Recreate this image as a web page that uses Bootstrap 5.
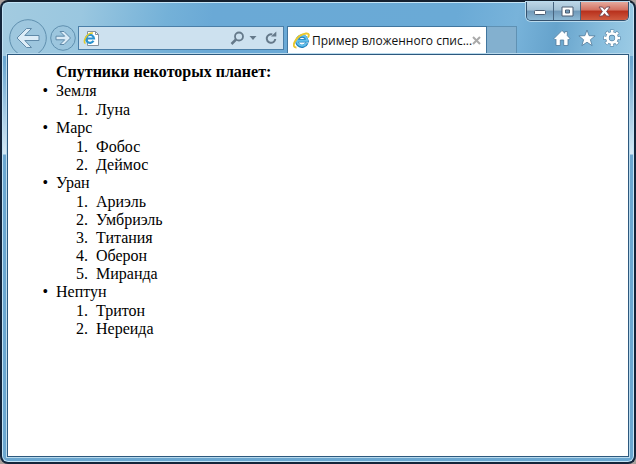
<!DOCTYPE html>
<html lang="ru">
<head>
<meta charset="utf-8">
<meta name="viewport" content="width=device-width, initial-scale=1">
<title>Пример вложенного списка</title>
<link href="https://cdn.jsdelivr.net/npm/bootstrap@5.3.0/dist/css/bootstrap.min.css" rel="stylesheet">
<style>
@counter-style spaced-decimal { system: extends decimal; suffix: ".\00a0\00a0"; }
body { background: #a99f9c; font-family: "Open Sans", "Noto Sans", sans-serif; }
.window {
  border: 2px solid #14253b; border-top-color: #14202f; border-radius: 8px;
  padding: 0 5px 5px;
  box-shadow: inset 0 0 0 1px #c4e4f6;
  background:
    linear-gradient(180deg, #8fc0dd00 0, #a5cde400 60px, #d5e9f5 152px, #6aa5cf00 153px) 0 0 / 6px 100% no-repeat,
    linear-gradient(180deg, #8fc0dd00 0, #a5cde400 60px, #d5e9f5 152px, #6aa5cf00 153px) 100% 0 / 6px 100% no-repeat,
    linear-gradient(100deg, #a3cbe0 0, #9ac7e0 80px, #74b1d8 165px, #6aa9d6 210px, #6aaad6 450px, #78b3da 510px, #66a3cc 550px, #8abfde 600px, #9ccbe5 100%) 0 0 / 100% 54px no-repeat,
    #6ba7d0;
}
.plain { background: none; border: 0; padding: 0; line-height: 0; color: inherit; flex-shrink: 0; }
.captions { height: 17px; }
.caption-group { border: 1px solid #34516e; border-top: 0; border-radius: 0 0 5px 5px; overflow: hidden; height: 19px; box-shadow: 0 0 0 1px #b9daed; }
.cap { width: 27px; background: linear-gradient(#bcd5e6 0, #a2c0d5 45%, #6f98b8 50%, #8db9d5 100%); border-right: 1px solid #47647f; }
.cap-close { width: 47px; border-right: 0; background: linear-gradient(#e5a99d 0, #d3705f 45%, #b8301c 50%, #cf5b40 100%); }
.toolbar-row { height: 35px; overflow: hidden; padding-left: 2px; }
.nav-zone { height: 38px; gap: 3px; }
.address { flex: 0 1 206px; min-width: 0; height: 24px; margin: 7px 3px 0 2px; border: 1px solid #4b7fa8; background: #cde1ef; color: #65798a; padding: 0 5px 0 4px; }
.address input { flex: 1 1 0; width: 0; min-width: 0; border: 0; background: none; outline: 0; font-size: 12px; }
.tab-item { flex: 0 1 200px; min-width: 0; height: 28px; margin-top: 7px; border: 1px solid #41769f; border-bottom: 0; background: #fff; padding: 0 5px; font-size: 12px; color: #111; }
.tab-title { flex: 1 1 0; min-width: 0; margin-left: 2px; }
.new-tab { width: 30px; height: 28px; margin-top: 7px; background: #83b0cf; border: 1px solid #5f91b3; border-left: 0; border-bottom: 0; }
.tools { gap: 7px; padding-right: 8px; margin-top: 9px; height: 20px; }
.page-view { border: 1px solid #2d597e; box-shadow: 0 0 0 1px #b9daed; background: #fff; color: #000; padding: 8px 8px 8px 48px; font: 16px/18px "Liberation Serif", serif; }
.page-view h1 { font: bold 16px/18px "Liberation Serif", serif; margin: 0 0 1px; }
.page-view ul { margin: 0; padding: 0; list-style-type: "•\00a0\00a0"; }
.page-view ol { margin: 1px 0 0; padding-left: 40px; list-style-type: spaced-decimal; }
</style>
<script src="https://cdn.jsdelivr.net/npm/bootstrap@5.3.0/dist/js/bootstrap.bundle.min.js" defer></script>
</head>
<body>
<div class="window d-flex flex-column min-vh-100">
  <div class="captions d-flex justify-content-end">
    <div class="caption-group d-flex">
      <button class="plain cap" aria-label="Свернуть"><svg width="14" height="8" viewBox="0 0 14 8"><rect x="1.500" y="3.500" width="11" height="4" rx="1" fill="#fff" stroke="#4c5d72"/></svg></button>
      <button class="plain cap" aria-label="Развернуть"><svg width="13" height="11" viewBox="0 0 13 11"><path d="M1 1h11v9H1zM4.500 4v3h4V4z" fill="#fff" fill-rule="evenodd" stroke="#4c5d72"/></svg></button>
      <button class="plain cap cap-close" aria-label="Закрыть"><svg width="13" height="11" viewBox="0 0 13 11"><path d="M1 1h3.500l2 2.400L8.500 1H12L8.600 5.500 12 10H8.500l-2-2.400-2 2.400H1l3.400-4.500z" fill="#fff" stroke="#6d4350" stroke-width=".9"/></svg></button>
    </div>
  </div>
  <div class="toolbar-row d-flex align-items-start">
    <div class="nav-zone d-flex align-items-center flex-shrink-0">
      <button class="plain" aria-label="Назад"><svg width="38" height="38" viewBox="0 0 38 38"><circle cx="19" cy="19" r="18.300" fill="#9bc4dc" fill-opacity=".5" stroke="#6090af"/><path d="M8 19l9.500-9.500h5L15.800 16.500H30v5H15.800l6.700 7h-5z" fill="#dcecf7" stroke="#608aa9"/></svg></button>
      <button class="plain" aria-label="Вперёд"><svg width="26" height="26" viewBox="0 0 26 26"><circle cx="13" cy="13" r="12.300" fill="#9bc4dc" fill-opacity=".5" stroke="#6090af"/><path d="M20.500 13l-6.500 6.500h-4l4.700-4.700H6v-3.600h8.700L10 6.500h4z" fill="#dcecf7" stroke="#608aa9"/></svg></button>
    </div>
    <div class="address d-flex align-items-center">
      <svg class="flex-shrink-0" width="17" height="17" viewBox="0 0 17 17"><path d="M4.500 1.500h8l3 3v11h-11z" fill="#fff" stroke="#8292a0"/><path d="M12.500 1.500v3h3" fill="none" stroke="#8292a0"/><path d="M10.500 10.800A4 4 0 1 1 11 8.500H4" fill="none" stroke="#2a93cf" stroke-width="2.200"/><path d="M2.500 13.500C-1 12 4 2.500 10 3" fill="none" stroke="#e1c92e" stroke-width="1.500"/></svg>
      <input type="text" aria-label="Адрес">
      <button class="plain" aria-label="Поиск"><svg width="15" height="15" viewBox="0 0 15 15"><circle cx="9" cy="5.500" r="4" fill="none" stroke="currentColor" stroke-width="1.800"/><path d="M6 8.500L1.500 13" stroke="currentColor" stroke-width="2.500"/></svg></button>
      <button class="plain ms-1" aria-label="Список"><svg width="8" height="6" viewBox="0 0 8 6"><path d="M.5 1h7L4 5z" fill="currentColor"/></svg></button>
      <button class="plain ms-2" aria-label="Обновить"><svg width="13" height="14" viewBox="0 0 13 14"><path d="M10.300 8a4.300 4.300 0 1 1-3-4.600" fill="none" stroke="currentColor" stroke-width="2"/><path d="M6 5.500h5.300V.5z" fill="currentColor"/></svg></button>
    </div>
    <div class="tab-item d-flex align-items-center">
      <svg class="flex-shrink-0" width="17" height="17" viewBox="0 0 17 17"><path d="M13.800 11A5.100 5.100 0 1 1 14.100 8.800H5" fill="none" stroke="#2180bd" stroke-width="3.400"/><path d="M13.500 11A5.100 5.100 0 1 1 14.100 8.800H5" fill="none" stroke="#62c0ec" stroke-width="2"/><path d="M3.500 15.500C-3 16 3 3 13 1.500c3-.4 3.400 1.500 2 4" fill="none" stroke="#eac72e" stroke-width="1.900"/></svg>
      <span class="tab-title text-nowrap overflow-hidden">Пример вложенного спис...</span>
      <button class="plain" aria-label="Закрыть вкладку"><svg width="9" height="9" viewBox="0 0 9 9"><path d="M1 1l7 7M8 1L1 8" stroke="#aaa" stroke-width="2"/></svg></button>
    </div>
    <button class="plain new-tab" aria-label="Новая вкладка"></button>
    <div class="tools d-flex align-items-center ms-auto">
      <button class="plain" aria-label="Домой"><svg width="18" height="18" viewBox="0 0 18 18"><path d="M9 1.500l2.800 2.700V2.500h2.500v4.200L17 9.500l-1.300 1.300-.7-.6v6.300h-4.300V11H7.300v5.500H3v-6.300l-.7.600L1 9.500z" fill="#fff" stroke="#507b9c" stroke-width=".8"/></svg></button>
      <button class="plain" aria-label="Избранное"><svg width="18" height="18" viewBox="0 0 18 18"><path d="M9 1l2.100 5.700 6 .2-4.700 3.800 1.700 5.900L9 13.200l-5.100 3.400 1.700-5.900L.9 6.900l6-.2z" fill="#fff" stroke="#507b9c" stroke-width=".8"/></svg></button>
      <button class="plain" aria-label="Сервис"><svg width="18" height="18" viewBox="0 0 18 18"><g fill="none"><circle cx="9" cy="9" r="6.700" stroke="#507b9c" stroke-width="3.800" stroke-dasharray="3.400 1.862" stroke-dashoffset="1.700"/><circle cx="9" cy="9" r="4.600" stroke="#507b9c" stroke-width="4"/><circle cx="9" cy="9" r="6.700" stroke="#fff" stroke-width="2.800" stroke-dasharray="2.600 2.662" stroke-dashoffset="1.300"/><circle cx="9" cy="9" r="4.600" stroke="#fff" stroke-width="2.900"/></g></svg></button>
    </div>
  </div>
  <main class="page-view flex-grow-1">
    <h1>Спутники некоторых планет:</h1>
    <ul>
      <li>Земля<ol><li>Луна</li></ol></li>
      <li>Марс<ol><li>Фобос</li><li>Деймос</li></ol></li>
      <li>Уран<ol><li>Ариэль</li><li>Умбриэль</li><li>Титания</li><li>Оберон</li><li>Миранда</li></ol></li>
      <li>Нептун<ol><li>Тритон</li><li>Нереида</li></ol></li>
    </ul>
  </main>
</div>
</body>
</html>
